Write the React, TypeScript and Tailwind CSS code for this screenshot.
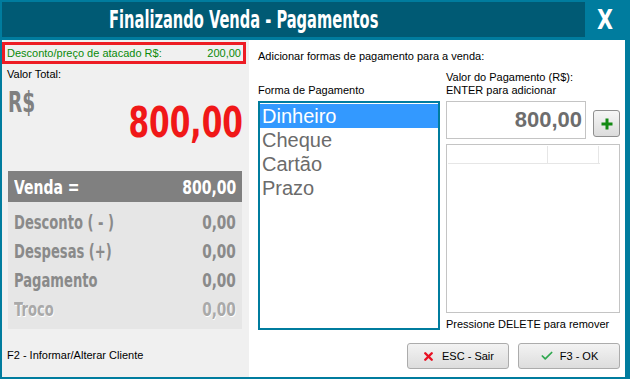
import { Check, X } from 'lucide-react'

const ui = "font-['Liberation_Sans',Arial,sans-serif]"
const cond = "font-['DejaVu_Sans',sans-serif] font-bold"

function Row({ label, value, light }: { label: string; value: string; light?: boolean }) {
  const color = light ? 'text-[#a9a9a9] [text-shadow:1px_1px_0_#ffffff]' : 'text-[#8a8a8a]'
  return (
    <div className={`h-[29px] flex items-center justify-between px-[6px] ${color}`}>
      <span className="inline-block text-[19px] leading-none scale-x-[0.69] origin-left">{label}</span>
      <span className="inline-block text-[19px] leading-none scale-x-[0.72] origin-right">{value}</span>
    </div>
  )
}

export default function App() {
  const formas = ['Dinheiro', 'Cheque', 'Cartão', 'Prazo']

  return (
    <div className={`w-[630px] h-[379px] bg-[#007c9e] pt-[2px] pl-[2px] pr-[5px] pb-[2px] flex flex-col ${ui}`}>
      {/* title bar */}
      <div className="h-[38px] flex shrink-0">
        <div className="flex-1 h-[35px] bg-[#005a74] flex items-center justify-center pr-[100px]">
          <span className={`${cond} inline-block text-white text-[24px] leading-none scale-x-[0.61]`}>
            Finalizando Venda - Pagamentos
          </span>
        </div>
        <div className="w-[40px] h-[35px] flex items-center justify-center">
          <span className={`${cond} inline-block text-white text-[26px] leading-none scale-x-[0.8]`}>X</span>
        </div>
      </div>

      <div className="flex flex-1 min-h-0">
        {/* left panel */}
        <div className="w-[247px] bg-[#f0f0f0] flex flex-col">
          <div className="mt-[2px] h-[22px] w-[244px] border-[3px] border-[#ed1c24] flex items-center justify-between px-[2px] text-[11px] text-[#0a8a0a]">
            <span>Desconto/preço de atacado R$:</span>
            <span>200,00</span>
          </div>
          <div className="mt-[3px] h-[14px] pl-[5px] text-[11px] leading-[14px] text-black">Valor Total:</div>
          <div className="h-[90px] flex justify-between px-[6px]">
            <span className={`${cond} inline-block text-[#808080] text-[29px] leading-none mt-[7px] scale-x-[0.64] origin-left`}>
              R$
            </span>
            <span className={`${cond} inline-block text-[#f01818] text-[43px] leading-none mt-[20px] scale-x-[0.69] origin-right`}>
              800,00
            </span>
          </div>
          <div className="ml-[6px] w-[234px]">
            <div className={`h-[31px] bg-[#808080] flex items-center justify-between px-[6px] text-white ${cond}`}>
              <span className="inline-block text-[20px] leading-none scale-x-[0.7] origin-left">Venda =</span>
              <span className="inline-block text-[20px] leading-none scale-x-[0.7] origin-right">800,00</span>
            </div>
            <div className={`h-[127px] bg-[#e6e6e6] pt-[6px] ${cond}`}>
              <Row label="Desconto ( - )" value="0,00" />
              <Row label="Despesas (+)" value="0,00" />
              <Row label="Pagamento" value="0,00" />
              <Row label="Troco" value="0,00" light />
            </div>
          </div>
          <div className="mt-[20px] pl-[5px] text-[11px] leading-[13px] text-black">F2 - Informar/Alterar Cliente</div>
        </div>

        {/* right panel */}
        <div className="flex-1 bg-white pl-[9px] pr-[5px] pt-[10px] flex flex-col text-[11px] text-black">
          <div className="leading-[13px]">Adicionar formas de pagamento para a venda:</div>
          <div className="flex gap-[6px]">
            <div className="w-[182px] flex flex-col">
              <div className="h-[34px] flex items-end leading-[13px]">Forma de Pagamento</div>
              <div className="mt-[4px] h-[229px] border-2 border-[#007c9e] pt-[1px]">
                {formas.map((f, i) => (
                  <div
                    key={f}
                    className={`h-[24px] flex items-center pl-[2px] text-[20px] leading-none ${
                      i === 0 ? 'bg-[#3399ff] text-white' : 'text-[#6b6b6b]'
                    }`}
                  >
                    {f}
                  </div>
                ))}
              </div>
            </div>
            <div className="flex-1 flex flex-col">
              <div className="h-[34px] flex flex-col justify-end leading-[13px]">
                <span>Valor do Pagamento (R$):</span>
                <span>ENTER para adicionar</span>
              </div>
              <div className="mt-[4px] flex gap-[7px]">
                <div className="w-[140px] h-[38px] border border-[#c4c4c4] flex items-center justify-end pr-[3px]">
                  <span className="text-[22px] font-bold text-[#6d6d6d] leading-none">800,00</span>
                </div>
                <button className="mt-[9px] w-[27px] h-[27px] rounded-[3px] border border-[#8f8f8f] bg-gradient-to-b from-[#f6f6f6] to-[#dcdcdc] flex items-center justify-center">
                  <svg width="14" height="14" viewBox="0 0 14 14">
                    <path d="M7 1.5v11M1.5 7h11" stroke="#138a13" strokeWidth="3" />
                  </svg>
                </button>
              </div>
              <div className="mt-[5px] h-[169px] border border-[#c4c4c4] pt-[1px] pl-[1px]">
                <div className="flex h-[18px] w-[152px] border-b border-[#e6e6e6]">
                  <div className="w-[100px] border-r border-[#e6e6e6]" />
                  <div className="w-[51px] border-r border-[#e6e6e6]" />
                </div>
              </div>
              <div className="mt-[5px] leading-[13px]">Pressione DELETE para remover</div>
            </div>
          </div>
          <div className="mt-[12px] flex justify-end gap-[9px]">
            <button className="w-[102px] h-[26px] rounded-[3px] border border-[#acacac] bg-gradient-to-b from-[#f3f3f3] to-[#dddddd] flex items-center justify-center gap-[7px] text-[11px] font-normal text-black">
              <X size={13} strokeWidth={4.5} color="#e81123" />
              <span>ESC - Sair</span>
            </button>
            <button className="w-[102px] h-[26px] rounded-[3px] border border-[#acacac] bg-gradient-to-b from-[#f3f3f3] to-[#dddddd] flex items-center justify-center gap-[6px] text-[11px] font-normal text-black">
              <Check size={14} strokeWidth={3} color="#2fa84f" />
              <span>F3 - OK</span>
            </button>
          </div>
        </div>
      </div>
    </div>
  )
}
